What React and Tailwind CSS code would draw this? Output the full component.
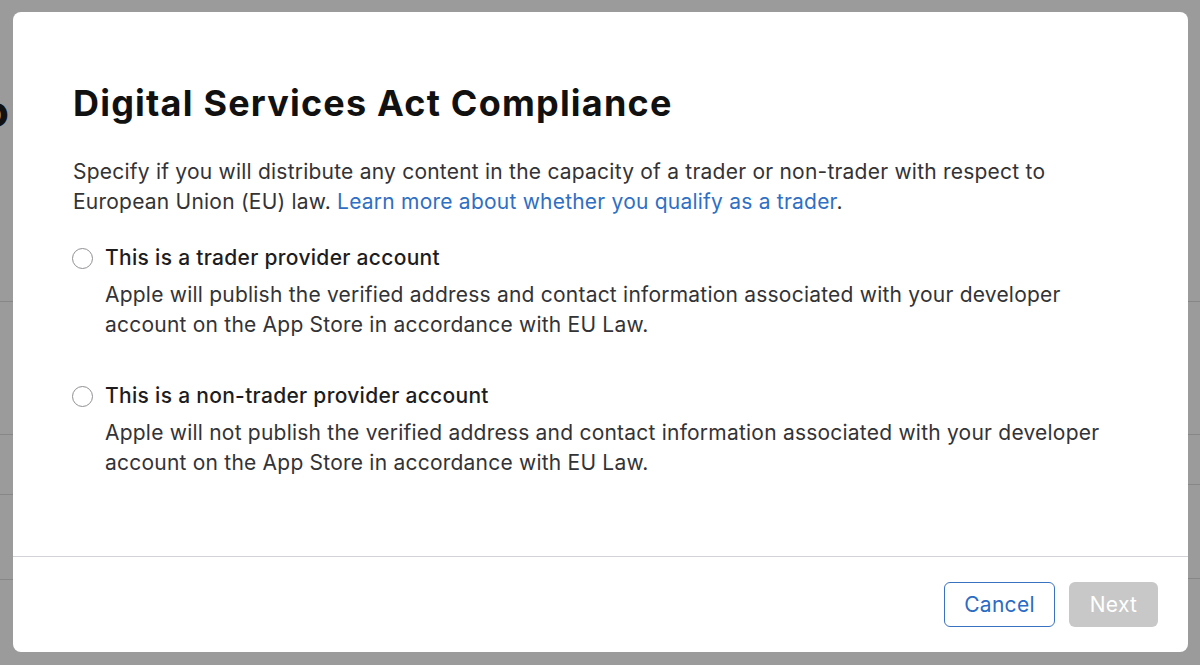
import React from "react";

function Radio({ label, lines }) {
  return (
    <div className="flex flex-col">
      <label className="flex items-center h-[30px] cursor-pointer">
        <span className="ml-[-1px] w-[21px] h-[21px] rounded-full border-[1.5px] border-[#909094] bg-white shrink-0" />
        <span className="ml-[12px] text-[21px] font-medium tracking-[0.3px] text-[#1d1d1f]">{label}</span>
      </label>
      <div className="mt-[7px] pl-[32px] text-[21px] leading-[30px] tracking-[0.22px] text-[#333336]">
        {lines.map((line) => (
          <div key={line} className="whitespace-nowrap">
            {line}
          </div>
        ))}
      </div>
    </div>
  );
}

export default function App() {
  return (
    <div
      className="relative w-[1200px] h-[665px] overflow-hidden bg-[#9b9b9b]"
      style={{ fontFamily: "Inter, 'Noto Sans', sans-serif" }}
    >
      {/* page behind the sheet */}
      <div className="flex h-full">
        <div className="w-[13px] flex flex-col">
          <div className="h-[301px] overflow-hidden pt-[86px]">
            <div className="ml-[-18px] text-[44px] font-bold leading-[50px] text-[#111111]">o</div>
          </div>
          <div className="h-[133px] border-t border-[#878787]" />
          <div className="h-[60px] border-t border-[#878787]" />
          <div className="h-[85px] border-t border-[#878787]" />
          <div className="border-t border-[#878787]" />
        </div>
        <div className="flex-1" />
        <div className="w-[12px] flex flex-col">
          <div className="h-[301px]" />
          <div className="h-[133px] border-t border-[#878787]" />
          <div className="h-[50px] border-t border-[#878787]" />
          <div className="h-[94px] border-t border-[#878787]" />
          <div className="border-t border-[#878787]" />
        </div>
      </div>

      {/* dialog */}
      <div className="absolute left-[13px] top-[12px] w-[1175px] h-[640px] bg-white rounded-[8px] flex flex-col">
        <div className="flex-1 px-[60px] pt-[71px]">
          <h1 className="text-[36px] leading-[40px] font-bold text-[#111111] tracking-[1.2px]">
            Digital Services Act Compliance
          </h1>
          <div className="mt-[34px] text-[21px] leading-[30px] tracking-[0.22px] text-[#333336]">
            <div className="whitespace-nowrap">
              Specify if you will distribute any content in the capacity of a trader or non-trader with respect to
            </div>
            <div className="whitespace-nowrap">
              European Union (EU) law.{" "}
              <a href="#" className="text-[#2f6fc4]">
                Learn more about whether you qualify as a trader
              </a>
              .
            </div>
          </div>
          <div className="mt-[26px] flex flex-col gap-[41px]">
            <Radio
              label="This is a trader provider account"
              lines={[
                "Apple will publish the verified address and contact information associated with your developer",
                "account on the App Store in accordance with EU Law.",
              ]}
            />
            <Radio
              label="This is a non-trader provider account"
              lines={[
                "Apple will not publish the verified address and contact information associated with your developer",
                "account on the App Store in accordance with EU Law.",
              ]}
            />
          </div>
        </div>
        <div className="h-[96px] border-t border-[#d2d2d7] flex items-center justify-end gap-[14px] pr-[30px]">
          <button className="w-[111px] h-[45px] rounded-[6px] border-[1.5px] border-[#3a72c2] text-[#2a6bc4] text-[21px] tracking-[0.3px]">
            Cancel
          </button>
          <button className="w-[89px] h-[45px] rounded-[6px] bg-[#c8c8c8] text-white text-[21px] tracking-[0.3px]">
            Next
          </button>
        </div>
      </div>
    </div>
  );
}
